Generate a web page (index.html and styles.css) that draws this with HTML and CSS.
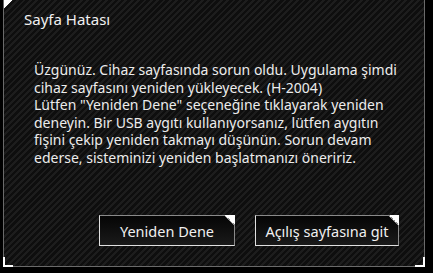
FILE: index.html
```html
<!DOCTYPE html>
<html lang="tr">
<head>
<meta charset="utf-8">
<link rel="stylesheet" href="styles.css">
</head>
<body>
<div class="dialog">
  <span class="corner corner-tl"></span>
  <span class="corner corner-bl"></span>
  <span class="corner corner-br"></span>
  <h1 class="title">Sayfa Hatası</h1>
  <p class="message">Üzgünüz. Cihaz sayfasında sorun oldu. Uygulama şimdi cihaz sayfasını yeniden yükleyecek. (H-2004)<br>Lütfen "Yeniden Dene" seçeneğine tıklayarak yeniden deneyin. Bir USB aygıtı kullanıyorsanız, lütfen aygıtın fişini çekip yeniden takmayı düşünün. Sorun devam ederse, sisteminizi yeniden başlatmanızı öneririz.</p>
  <div class="actions">
    <button class="btn btn-retry">Yeniden Dene</button>
    <button class="btn btn-home">Açılış sayfasına git</button>
  </div>
</div>
</body>
</html>
```

FILE: styles.css
```css
html, body {
  margin: 0;
  padding: 0;
  background: #000;
}
body {
  width: 433px;
  height: 273px;
  overflow: hidden;
  font-family: "Noto Sans", "Open Sans", sans-serif;
  color: #e8e8e8;
}
.dialog {
  position: relative;
  box-sizing: border-box;
  margin-left: 3px;
  width: 422px;
  height: 267px;
  border: 1px solid #6a6a6a;
  border-top: none;
  background: repeating-linear-gradient(135deg, #1d1d1d 0 2px, #0e0e0e 2px 4.5px);
  display: flex;
  flex-direction: column;
}
.corner {
  position: absolute;
  width: 8px;
  height: 8px;
}
.corner-tl {
  left: 0;
  top: 0;
  background: linear-gradient(135deg, #fff 50%, transparent 50%);
}
.corner-bl {
  left: -1px;
  bottom: -1px;
  border-left: 2px solid #fff;
  border-bottom: 2px solid #fff;
}
.corner-br {
  right: -1px;
  bottom: -1px;
  border-right: 2px solid #fff;
  border-bottom: 2px solid #fff;
}
.title {
  margin: 9px 0 0 20px;
  font-size: 15px;
  font-weight: normal;
  line-height: 20px;
  color: #f0f0f0;
}
.message {
  margin: 32px 22px 0 30px;
  font-size: 14px;
  line-height: 17.5px;
  color: #ececec;
}
.actions {
  margin-top: auto;
  margin-bottom: 20px;
  margin-right: 25px;
  display: flex;
  justify-content: flex-end;
  gap: 20px;
}
.btn {
  position: relative;
  height: 31px;
  box-sizing: border-box;
  padding: 0 8px;
  font-family: inherit;
  font-size: 14.5px;
  color: #f0f0f0;
  background: linear-gradient(#050505, #1a1a1a);
  border: 1px solid #8a8a8a;
  border-left-color: #e0e0e0;
  border-bottom-color: #e0e0e0;
  border-radius: 0;
  white-space: nowrap;
}
.btn::after {
  content: "";
  position: absolute;
  top: -1px;
  right: -1px;
  width: 10px;
  height: 10px;
  background: linear-gradient(45deg, transparent calc(50% - 1px), #8a8a8a calc(50% - 1px), #8a8a8a 50%, #fff 50%);
}
.btn-retry {
  width: 136px;
}
.btn-home {
  width: 144px;
}
```
